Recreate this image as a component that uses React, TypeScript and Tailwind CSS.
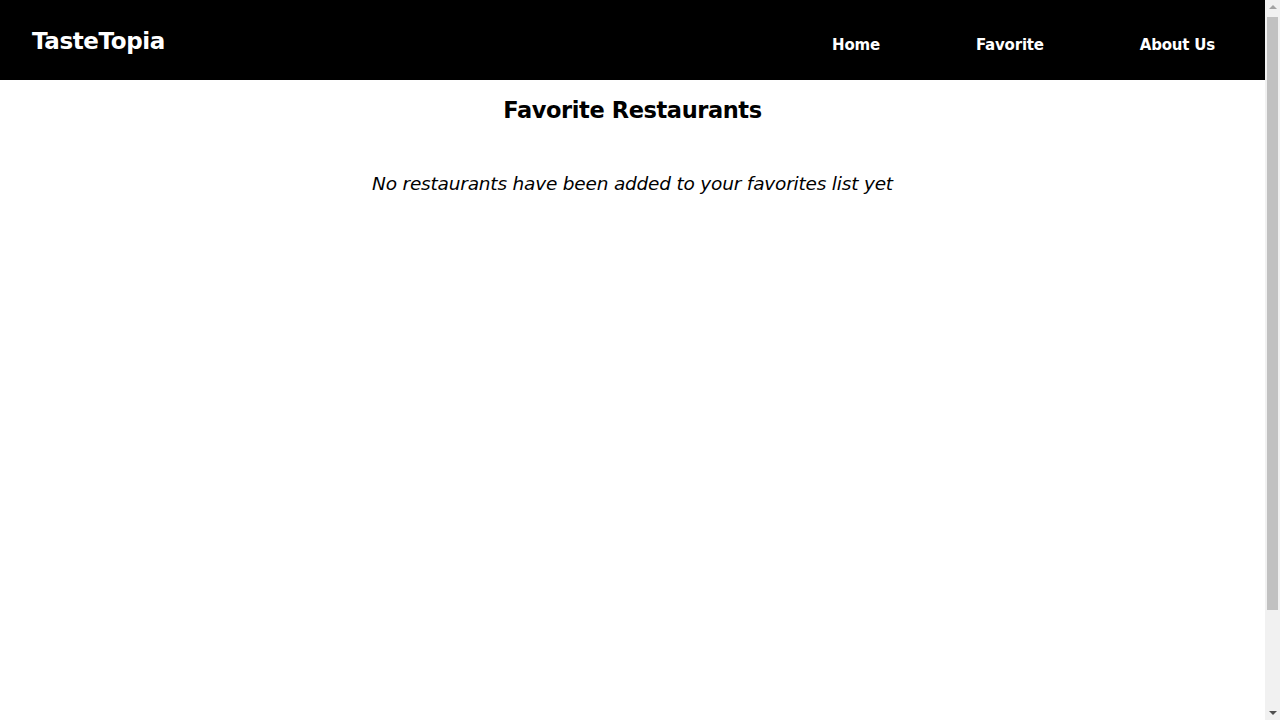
import React from 'react';

const navLinks = ['Home', 'Favorite', 'About Us'];

// stand-in for the browser's vertical scrollbar seen in the screenshot
const ScrollbarStrip: React.FC = () => (
  <div className="flex w-[15px] shrink-0 flex-col items-center bg-[#f1f1f1]">
    <span className="mt-[5px] h-0 w-0 border-x-[4px] border-b-[4px] border-x-transparent border-b-[#a3a3a3]" />
    <div className="mt-[8px] h-[593px] w-[11px] bg-[#c1c1c1]" />
    <span className="mt-auto mb-[5px] h-0 w-0 border-x-[4px] border-t-[4px] border-x-transparent border-t-[#505050]" />
  </div>
);

const App: React.FC = () => {
  return (
    <div className="flex h-[720px] bg-white font-['DejaVu_Sans',sans-serif] text-black">
      <div className="min-w-0 flex-1">
        <header className="flex h-20 items-center justify-between bg-black pl-8 pr-[50px]">
          <h1 className="mt-0.5 text-[23px] font-bold tracking-[-0.4px] text-white">TasteTopia</h1>
          <nav className="mt-2.5 flex gap-24">
            {navLinks.map((link) => (
              <a key={link} href="#" className="text-[15px] font-semibold tracking-[-0.2px] text-white">
                {link}
              </a>
            ))}
          </nav>
        </header>

        <main className="flex flex-col items-center pt-3.5">
          <h2 className="text-[22.5px] font-bold tracking-[-0.4px]">Favorite Restaurants</h2>
          <p className="mt-[42px] text-[18.5px] italic tracking-[-0.2px]">
            No restaurants have been added to your favorites list yet
          </p>
        </main>
      </div>
      <ScrollbarStrip />
    </div>
  );
};

export default App;
